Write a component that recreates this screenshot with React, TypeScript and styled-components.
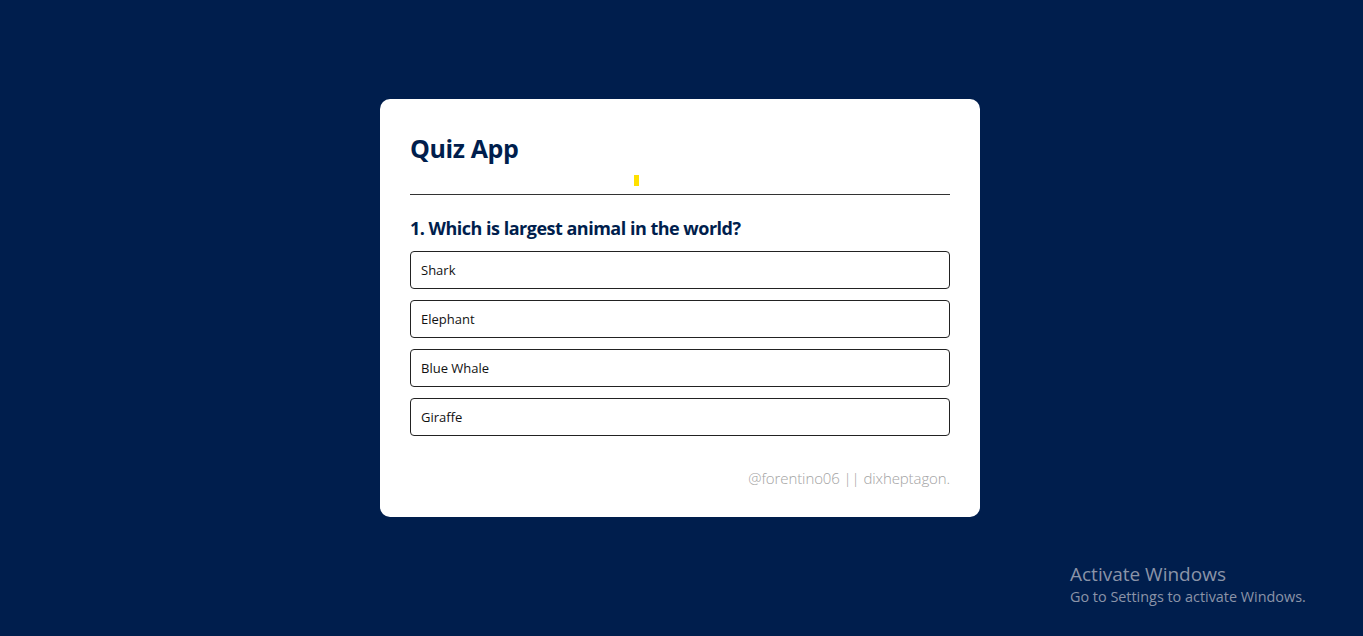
import React from 'react'
import styled, { createGlobalStyle } from 'styled-components'

const GlobalStyle = createGlobalStyle`
    * {
        box-sizing: border-box;
        margin: 0;
        padding: 0;
    }
    body {
        background: #001e4d;
        font-family: "Open Sans", "Noto Sans", sans-serif;
    }
`

const StyledPage = styled.div`
    min-height: 636px;
    display: flex;
    flex-direction: column;
    align-items: center;
    padding: 99px 3px 0 0;
    position: relative;
`

const StyledCard = styled.div`
    width: 600px;
    background: #fff;
    border-radius: 10px;
    padding: 30px 30px 29px;
`

const StyledTitle = styled.h1`
    font-family: "Open Sans", sans-serif;
    font-size: 25px;
    font-weight: 700;
    line-height: 38px;
    color: #001e4d;
    letter-spacing: -0.4px;
`

const StyledMarker = styled.div`
    width: 5px;
    height: 11px;
    margin: 8px 0 0 224px;
    background: #ffe100;
`

const StyledDivider = styled.hr`
    border: none;
    border-top: 1px solid #333;
    margin-top: 8px;
`

const StyledQuestion = styled.h2`
    font-family: "Open Sans", sans-serif;
    font-size: 18px;
    font-weight: 700;
    line-height: 26px;
    color: #001e4d;
    margin: 20px 0 10px;
    letter-spacing: -0.5px;
`

const StyledAnswers = styled.div`
    display: flex;
    flex-direction: column;
    gap: 11px;
`

const StyledAnswer = styled.button`
    width: 100%;
    height: 38px;
    background: #fff;
    color: #111;
    border: 1px solid #222;
    border-radius: 4px;
    padding: 0 10px;
    text-align: left;
    font-family: "Open Sans", sans-serif;
    font-size: 13px;
    cursor: pointer;
`

const StyledCredit = styled.p`
    margin-top: 32px;
    text-align: right;
    font-family: "Open Sans", sans-serif;
    font-weight: 300;
    font-size: 15px;
    line-height: 20px;
    color: #a3a3a3;
    letter-spacing: -0.1px;
`

const StyledWatermark = styled.div`
    position: absolute;
    left: 1070px;
    top: 562px;
    color: #8b94a8;
    font-family: "Open Sans", sans-serif;

    > h3 {
        font-size: 19px;
        font-weight: 400;
        line-height: 24px;
    }

    > span {
        display: block;
        font-size: 14.4px;
        line-height: 22px;
    }
`

const answers = ['Shark', 'Elephant', 'Blue Whale', 'Giraffe']

const App = () => {
    return (
        <>
            <GlobalStyle />
            <StyledPage>
                <StyledCard>
                    <StyledTitle>Quiz App</StyledTitle>
                    <StyledMarker />
                    <StyledDivider />
                    <StyledQuestion>1. Which is largest animal in the world?</StyledQuestion>
                    <StyledAnswers>
                        {answers.map(item => <StyledAnswer key={item}>{item}</StyledAnswer>)}
                    </StyledAnswers>
                    <StyledCredit>@forentino06 || dixheptagon.</StyledCredit>
                </StyledCard>
                <StyledWatermark>
                    <h3>Activate Windows</h3>
                    <span>Go to Settings to activate Windows.</span>
                </StyledWatermark>
            </StyledPage>
        </>
    )
}

export default App
